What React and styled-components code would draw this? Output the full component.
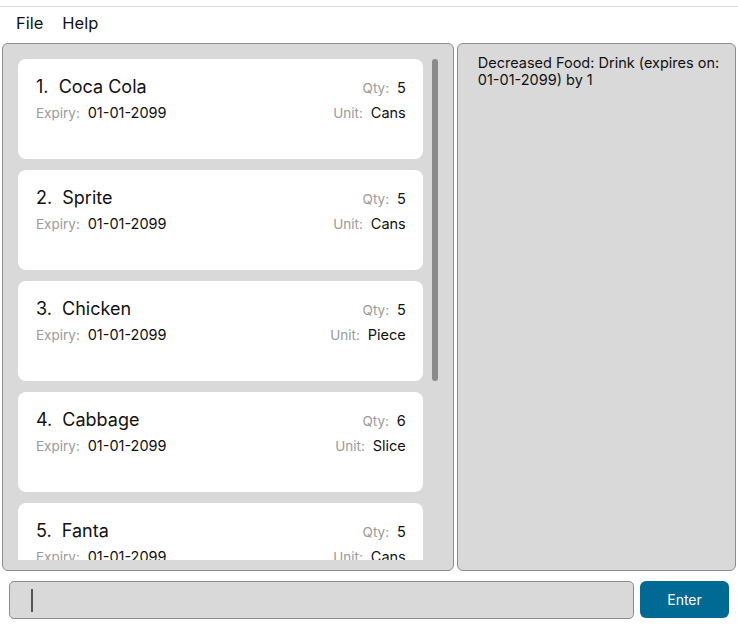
import React from 'react';
import styled, { createGlobalStyle } from 'styled-components';

const foods = [
  { name: 'Coca Cola', qty: 5, unit: 'Cans', expiry: '01-01-2099' },
  { name: 'Sprite', qty: 5, unit: 'Cans', expiry: '01-01-2099' },
  { name: 'Chicken', qty: 5, unit: 'Piece', expiry: '01-01-2099' },
  { name: 'Cabbage', qty: 6, unit: 'Slice', expiry: '01-01-2099' },
  { name: 'Fanta', qty: 5, unit: 'Cans', expiry: '01-01-2099' },
];

const GlobalStyle = createGlobalStyle`
  html, body {
    margin: 0;
    padding: 0;
    background: #fff;
    font-family: Inter, "Liberation Sans", Arial, sans-serif;
  }
`;

const Window = styled.div`
  width: 738px;
  height: 625px;
  display: flex;
  flex-direction: column;
  box-sizing: border-box;
  padding-top: 6px;
  overflow: hidden;
`;

const MenuBar = styled.div`
  border-top: 1px solid #dcdcdc;
  height: 36px;
  box-sizing: border-box;
  padding: 0 0 4px 16px;
  display: flex;
  align-items: center;
  gap: 19px;
  font-size: 16.5px;
  color: #111;
`;

const Main = styled.div`
  display: flex;
  gap: 3px;
  padding: 1px 2px 0 2px;
  height: 528px;
`;

const Panel = styled.div`
  background: #d9d9d9;
  border: 1px solid #8c8c8c;
  border-radius: 6px;
  box-sizing: border-box;
  width: ${p => p.$width}px;
  height: 100%;
  position: relative;
`;

const ListViewport = styled.div`
  position: absolute;
  top: 15px;
  left: 15px;
  right: 30px;
  bottom: 10px;
  overflow: hidden;
  display: flex;
  flex-direction: column;
  gap: 11px;
`;

const ScrollThumb = styled.div`
  position: absolute;
  top: 15px;
  right: 15px;
  width: 6px;
  height: 322px;
  border-radius: 3px;
  background: #8a8a8a;
`;

const Card = styled.div`
  flex: none;
  height: 100px;
  background: #fff;
  border-radius: 8px;
  box-sizing: border-box;
  padding: 17px 17px 0 18px;
  display: flex;
  flex-direction: column;
  gap: 7px;
`;

const Row = styled.div`
  display: flex;
  justify-content: space-between;
  align-items: baseline;
`;

const Title = styled.span`
  font-size: 18px;
  color: #111;
  white-space: pre;
`;

const Field = styled.span`
  font-size: 14.5px;
  color: #111;
  white-space: pre;
`;

const Label = styled.span`
  font-size: 13.5px;
  color: #9a9a9a;
`;

const Feedback = styled.div`
  padding: 10px 6px 11px 20px;
  font-size: 14.5px;
  line-height: 17px;
  color: #111;
`;

const FeedbackLine = styled.div`
  white-space: nowrap;
`;

const CommandBar = styled.div`
  display: flex;
  gap: 6px;
  padding: 10px 9px 0 9px;
`;

const CommandInput = styled.div`
  width: 625px;
  height: 38px;
  box-sizing: border-box;
  background: #d9d9d9;
  border: 1px solid #8c8c8c;
  border-radius: 5px;
  display: flex;
  align-items: center;
  padding-left: 21px;
`;

const Caret = styled.div`
  width: 2px;
  height: 23px;
  background: #555;
`;

const EnterButton = styled.button`
  width: 89px;
  height: 37px;
  border: none;
  border-radius: 6px;
  background: #006994;
  color: #fff;
  font-family: inherit;
  font-size: 14px;
`;

export default function App() {
  return (
    <>
      <GlobalStyle />
      <Window>
        <MenuBar>
          <span>File</span>
          <span>Help</span>
        </MenuBar>
        <Main>
          <Panel $width={453}>
            <ListViewport>
              {foods.map((f, i) => (
                <Card key={f.name}>
                  <Row>
                    <Title>{`${i + 1}.  ${f.name}`}</Title>
                    <Field><Label>Qty: </Label> {f.qty}</Field>
                  </Row>
                  <Row>
                    <Field><Label>Expiry: </Label> {f.expiry}</Field>
                    <Field><Label>Unit: </Label> {f.unit}</Field>
                  </Row>
                </Card>
              ))}
            </ListViewport>
            <ScrollThumb />
          </Panel>
          <Panel $width={280}>
            <Feedback>
              <FeedbackLine>Decreased Food: Drink (expires on:</FeedbackLine>
              <FeedbackLine>01-01-2099) by 1</FeedbackLine>
            </Feedback>
          </Panel>
        </Main>
        <CommandBar>
          <CommandInput>
            <Caret />
          </CommandInput>
          <EnterButton>Enter</EnterButton>
        </CommandBar>
      </Window>
    </>
  );
}
